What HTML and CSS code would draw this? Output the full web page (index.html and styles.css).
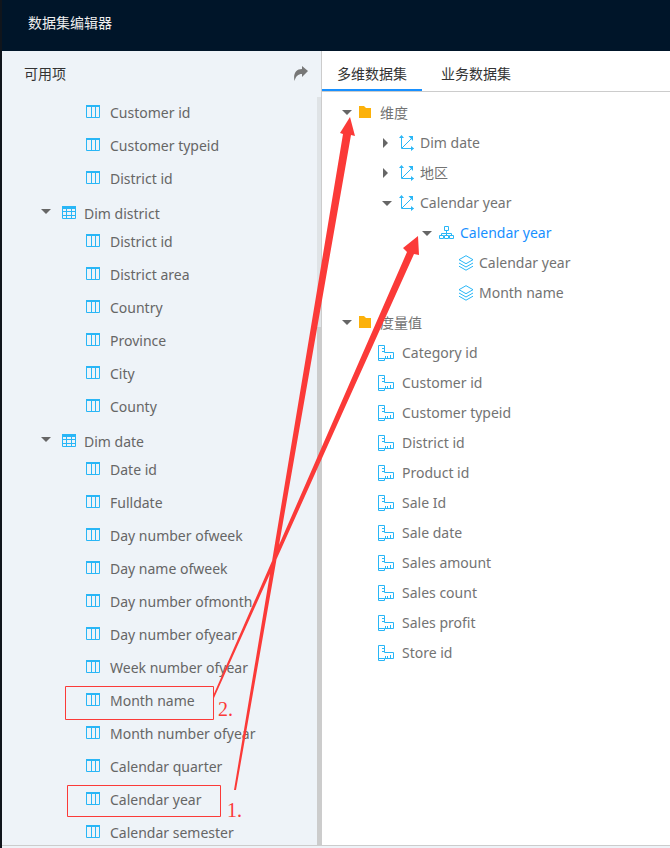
FILE: index.html
```html
<!DOCTYPE html>
<html lang="zh-CN">
<head>
<meta charset="utf-8">
<title>数据集编辑器</title>
<link rel="stylesheet" href="styles.css">
</head>
<body>
<svg class="defs" aria-hidden="true">
  <symbol id="col" viewBox="0 0 14 13"><path fill="none" stroke="#29b6f6" d="M.5 1v11.5h13V1M5.5 1v11.5M9.5 1v11.5"/><path fill="#29b6f6" d="M0 0h14v2H0z"/></symbol>
  <symbol id="tbl" viewBox="0 0 14 13"><path fill="none" stroke="#29b6f6" d="M.5 1v11.5h13V1M4.5 1v11.5M9.5 1v11.5M0 5.5h14M0 9.5h14"/><path fill="#29b6f6" d="M0 0h14v3H0z"/></symbol>
  <symbol id="dir" viewBox="0 0 12 12"><path fill="#fcb10a" d="M0 0h5l2 2h5v10H0z"/></symbol>
  <symbol id="dim" viewBox="0 0 16 16"><path fill="none" stroke="#29b6f6" d="M2.500 1v12.500h12M3 13L13 3"/><path fill="#29b6f6" d="M2.500 0L5 3H0zM15 13.500L12 11v5zM14 1v5L9.500 1z"/></symbol>
  <symbol id="org" viewBox="0 0 16 14"><path fill="none" stroke="#29b6f6" d="M5.500.5h4v4h-4zM.5 9.500h4v3h-4zM5.500 9.500h4v3h-4zM10.500 9.500h4v3h-4zM7.500 4.500v5M2.500 9.500v-2h10v2"/></symbol>
  <symbol id="lay" viewBox="0 0 16 16"><path fill="none" stroke="#29b6f6" d="M8 .7l7 4-7 4-7-4zM1 8l7 4 7-4M1 11.200l7 4 7-4"/></symbol>
  <symbol id="mea" viewBox="0 0 16 16"><path fill="none" stroke="#29b6f6" d="M.5.5h6v7h9v6h-9v2h-6zM.5 13.500h6M6 3.500H4M6 6.500H4M7.500 13v-2M9.500 13v-2M12.500 13v-3"/></symbol>
</svg>
<header class="top"><h1>数据集编辑器</h1></header>
<main class="work">
  <section class="source">
    <div class="source-head"><h2>可用项</h2>
      <button class="share" aria-label="共享"><svg width="14" height="15" viewBox="0 0 14 15"><path fill="#777" d="M8 0l6 5-6 6V8C4 8 2 10 .5 15-1 8 2 3 8 3z"/></svg></button>
    </div>
    <ul class="fields" id="fields"></ul>
    <div class="scroll"><div class="thumb"></div></div>
  </section>
  <section class="cube">
    <nav class="tabs"><a href="#cube" class="on">多维数据集</a><a href="#biz">业务数据集</a></nav>
    <ul class="tree" id="tree"></ul>
  </section>
</main>
<footer class="foot"></footer>
<svg class="notes" width="670" height="848" viewBox="0 0 670 848">
  <g fill="none" stroke="#fb3a38"><path d="M65.500 686.500h148v33h-148zM67.500 785.500h153v31h-153z"/></g>
  <g fill="#fb3a38"><path d="M234 790L343 134l-3-1 10-16 5 19-4-1L236 790zM213 696L407 252l-4-4 15-12 1 19-5-1L214 698z"/></g>
  <g class="num"><text x="218" y="716">2.</text><text x="227" y="817">1.</text></g>
</svg>
<script src="app.js"></script>
</body>
</html>
```
FILE: styles.css
```css
* { box-sizing: border-box; }
body {
  margin: 0;
  height: 100vh;
  display: flex;
  flex-direction: column;
  overflow: hidden;
  position: relative;
  border-left: 2px solid #10151c;
  font: 14px/20px "Noto Sans", "Noto Sans CJK SC", sans-serif;
  color: #666;
}
.defs { position: absolute; width: 0; height: 0; }
h1, h2 { margin: 0; font-size: 14px; font-weight: 400; }
ul { list-style: none; margin: 0; padding: 0; }
.top { background: #001529; color: #eee; padding: 13px 26px 18px; }
.work { flex: 1; display: flex; min-height: 0; }
.source {
  flex: 0 0 320px;
  position: relative;
  display: flex;
  flex-direction: column;
  background: #eef3f8;
  border-right: 1px solid #ccc;
}
.source-head { display: flex; align-items: center; justify-content: space-between; height: 45px; padding: 0 13px 0 22px; color: #333; }
.share { border: 0; padding: 0; background: none; display: flex; }
.fields { flex: 1; min-height: 0; overflow: hidden; }
.row { display: flex; align-items: center; white-space: nowrap; }
.row svg { flex: none; }
.field { height: 33px; padding-left: 84px; gap: 10px; }
.table { height: 30px; padding: 7px 0 0 39px; gap: 8px; }
.field svg, .table svg { margin-bottom: 2px; }
.arrow { width: 0; height: 0; border: 5px solid transparent; border-top-color: #666; border-bottom: 0; margin-right: 2px; }
.table .arrow { margin-right: 3px; margin-bottom: 4px; }
.arrow.shut { border: 5px solid transparent; border-left-color: #666; border-right: 0; margin-right: 6px; margin-left: 1px; }
.scroll { position: absolute; right: 0; top: 46px; bottom: 0; width: 4px; padding-top: 230px; background: #dfe3e6; }
.thumb { height: 100%; background: #ccc; }
.cube { flex: 1; background: #fff; min-width: 0; }
.tabs { display: flex; gap: 4px; height: 41px; border-bottom: 1px solid #ccc; }
.tabs a { width: 100px; padding-top: 13px; text-align: center; text-decoration: none; color: #333; }
.tabs .on { border-bottom: 2px solid #1890ff; }
.tree { padding-top: 6px; color: #737373; }
.tree .row { height: 30px; gap: 5px; }
.l0 { padding-left: 20px; }
.l0 svg { margin-right: 4px; margin-bottom: 2px; }
.l0 .arrow { margin-bottom: 2px; }
.l1 { padding-left: 60px; }
.l2 { padding-left: 100px; }
.l3 { padding-left: 136px; }
.lm { padding-left: 56px; }
.lm svg { margin-right: 3px; }
.tree .picked { color: #1890ff; }
.foot { height: 3px; background: #eef3f8; border-top: 1px solid #ccc; }
.notes { position: absolute; left: -2px; top: 0; pointer-events: none; }
.num { font: 20px "Liberation Serif", serif; fill: #fb3a38; }
```
FILE: app.js
```js
const icon = (id, w, h) => `<svg width="${w}" height="${h}"><use href="#${id}"/></svg>`;
const fields = [
  "Customer id", "Customer typeid", "District id",
  "*Dim district", "District id", "District area", "Country", "Province", "City", "County",
  "*Dim date", "Date id", "Fulldate", "Day number ofweek", "Day name ofweek", "Day number ofmonth",
  "Day number ofyear", "Week number ofyear", "Month name", "Month number ofyear",
  "Calendar quarter", "Calendar year", "Calendar semester"
];
document.getElementById("fields").innerHTML = fields.map(f => f[0] === "*"
  ? `<li class="row table"><i class="arrow"></i>${icon("tbl", 14, 13)}<span>${f.slice(1)}</span></li>`
  : `<li class="row field">${icon("col", 14, 13)}<span>${f}</span></li>`).join("");

const open = '<i class="arrow"></i>', shut = '<i class="arrow shut"></i>';
const tree = [
  ["l0", open, icon("dir", 12, 12), "维度"],
  ["l1", shut, icon("dim", 16, 16), "Dim date"],
  ["l1", shut, icon("dim", 16, 16), "地区"],
  ["l1", open, icon("dim", 16, 16), "Calendar year"],
  ["l2 picked", open, icon("org", 16, 14), "Calendar year"],
  ["l3", "", icon("lay", 16, 16), "Calendar year"],
  ["l3", "", icon("lay", 16, 16), "Month name"],
  ["l0", open, icon("dir", 12, 12), "度量值"],
  ...["Category id", "Customer id", "Customer typeid", "District id", "Product id", "Sale Id",
    "Sale date", "Sales amount", "Sales count", "Sales profit", "Store id"]
    .map(t => ["lm", "", icon("mea", 16, 16), t])
];
document.getElementById("tree").innerHTML = tree
  .map(([c, a, i, t]) => `<li class="row ${c}">${a}${i}<span>${t}</span></li>`).join("");
```
